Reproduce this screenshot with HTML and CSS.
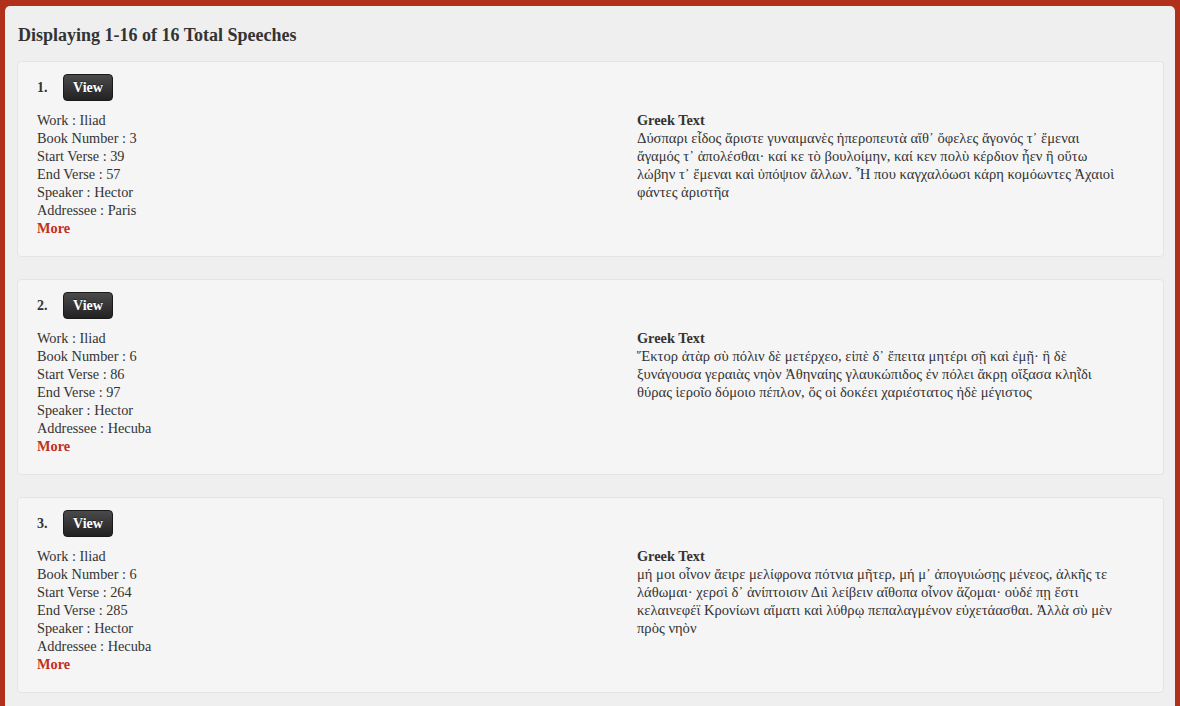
FILE: index.html
```html
<!DOCTYPE html>
<html>
<head>
<meta charset="utf-8">
<link rel="stylesheet" href="styles.css">
</head>
<body>
<div class="page">
  <h2 class="title">Displaying 1-16 of 16 Total Speeches</h2>

  <div class="card">
    <div class="card-head"><span class="num">1.</span><a class="btn">View</a></div>
    <div class="cols">
      <div class="meta">
        <div>Work : Iliad</div>
        <div>Book Number : 3</div>
        <div>Start Verse : 39</div>
        <div>End Verse : 57</div>
        <div>Speaker : Hector</div>
        <div>Addressee : Paris</div>
        <a class="more">More</a>
      </div>
      <div class="greek">
        <div class="gh">Greek Text</div>
        <div class="gt">Δύσπαρι εἶδος ἄριστε γυναιμανὲς ἠπεροπευτὰ αἴθ᾽ ὄφελες ἄγονός τ᾽ ἔμεναι<br>ἄγαμός τ᾽ ἀπολέσθαι· καί κε τὸ βουλοίμην, καί κεν πολὺ κέρδιον ἦεν ἢ οὕτω<br>λώβην τ᾽ ἔμεναι καὶ ὑπόψιον ἄλλων. Ἦ που καγχαλόωσι κάρη κομόωντες Ἀχαιοὶ<br>φάντες ἀριστῆα</div>
      </div>
    </div>
  </div>

  <div class="card">
    <div class="card-head"><span class="num">2.</span><a class="btn">View</a></div>
    <div class="cols">
      <div class="meta">
        <div>Work : Iliad</div>
        <div>Book Number : 6</div>
        <div>Start Verse : 86</div>
        <div>End Verse : 97</div>
        <div>Speaker : Hector</div>
        <div>Addressee : Hecuba</div>
        <a class="more">More</a>
      </div>
      <div class="greek">
        <div class="gh">Greek Text</div>
        <div class="gt">Ἕκτορ ἀτὰρ σὺ πόλιν δὲ μετέρχεο, εἰπὲ δ᾽ ἔπειτα μητέρι σῇ καὶ ἐμῇ· ἣ δὲ<br>ξυνάγουσα γεραιὰς νηὸν Ἀθηναίης γλαυκώπιδος ἐν πόλει ἄκρῃ οἴξασα κληῗδι<br>θύρας ἱεροῖο δόμοιο πέπλον, ὅς οἱ δοκέει χαριέστατος ἠδὲ μέγιστος</div>
      </div>
    </div>
  </div>

  <div class="card">
    <div class="card-head"><span class="num">3.</span><a class="btn">View</a></div>
    <div class="cols">
      <div class="meta">
        <div>Work : Iliad</div>
        <div>Book Number : 6</div>
        <div>Start Verse : 264</div>
        <div>End Verse : 285</div>
        <div>Speaker : Hector</div>
        <div>Addressee : Hecuba</div>
        <a class="more">More</a>
      </div>
      <div class="greek">
        <div class="gh">Greek Text</div>
        <div class="gt">μή μοι οἶνον ἄειρε μελίφρονα πότνια μῆτερ, μή μ᾽ ἀπογυιώσῃς μένεος, ἀλκῆς τε<br>λάθωμαι· χερσὶ δ᾽ ἀνίπτοισιν Διὶ λείβειν αἴθοπα οἶνον ἅζομαι· οὐδέ πῃ ἔστι<br>κελαινεφέϊ Κρονίωνι αἵματι καὶ λύθρῳ πεπαλαγμένον εὐχετάασθαι. Ἀλλὰ σὺ μὲν<br>πρὸς νηὸν</div>
      </div>
    </div>
  </div>
</div>
</body>
</html>
```
FILE: styles.css
```css
html, body {
  margin: 0;
  padding: 0;
}
body {
  background: #b0301c;
  font-family: "Liberation Serif", "DejaVu Serif", serif;
  color: #333;
  height: 706px;
  overflow: hidden;
  padding: 6px 5px 0 5px;
  box-sizing: border-box;
}
.page {
  background: #efefef;
  border-radius: 5px 5px 0 0;
  padding: 1px 11px 40px 12px;
  min-height: 760px;
}
.title {
  font-size: 18px;
  font-weight: bold;
  margin: 18px 0 16px 1px;
  line-height: 20px;
  color: #333;
}
.card {
  background: #f5f5f5;
  border: 1px solid #e4e4e4;
  border-radius: 4px;
  height: 196px;
  box-sizing: border-box;
  padding: 12px 19px 0 19px;
  margin-bottom: 22px;
}
.card-head {
  display: flex;
  align-items: center;
  gap: 15px;
  height: 27px;
}
.num {
  font-weight: bold;
  font-size: 14px;
  width: 11px;
}
.btn {
  display: inline-flex;
  align-items: center;
  justify-content: center;
  width: 50px;
  height: 27px;
  box-sizing: border-box;
  border-radius: 4px;
  background: linear-gradient(#4a4a4a, #222);
  border: 1px solid #1a1a1a;
  color: #fff;
  font-weight: bold;
  font-size: 14px;
  text-shadow: 0 -1px 0 rgba(0,0,0,.4);
}
.cols {
  display: flex;
  margin-top: 10px;
  font-size: 14.3px;
  line-height: 18px;
}
.meta {
  width: 600px;
  flex-shrink: 0;
}
.more {
  display: block;
  color: #c0301c;
  font-weight: bold;
}
.greek {
  flex: 1;
  min-width: 0;
}
.gh {
  font-weight: bold;
}
.gt {
  font-size: 14.6px;
  white-space: nowrap;
}
```
